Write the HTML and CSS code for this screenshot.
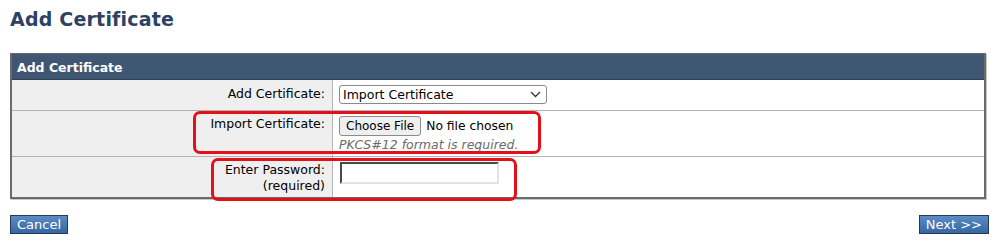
FILE: index.html
```html
<!DOCTYPE html>
<html>
<head>
<meta charset="utf-8">
<link rel="stylesheet" href="styles.css">
</head>
<body>
<h1 class="title">Add Certificate</h1>
<div class="panel">
  <div class="panel-head">Add Certificate</div>
  <div class="row row1">
    <div class="label">Add Certificate:</div>
    <div class="value">
      <div class="sel"><span>Import Certificate</span><svg class="chev" width="11" height="7" viewBox="0 0 11 7"><path d="M1 1 L5.5 5.5 L10 1" fill="none" stroke="#333" stroke-width="1.3"/></svg></div>
    </div>
  </div>
  <div class="row row2">
    <div class="label"><span class="lbl">Import Certificate:</span></div>
    <div class="value">
      <div class="file"><button class="choose">Choose File</button><span class="nofile">No file chosen</span></div>
      <div class="hint">PKCS#12 format is required.</div>
    </div>
    <div class="mark mark1"></div>
  </div>
  <div class="row row3">
    <div class="label"><span class="lbl">Enter Password:<br>(required)</span></div>
    <div class="value">
      <div class="pw"></div>
    </div>
    <div class="mark mark2"></div>
  </div>
</div>
<div class="actions">
  <button class="btn">Cancel</button>
  <button class="btn">Next &gt;&gt;</button>
</div>
</body>
</html>
```

FILE: styles.css
```css
* { box-sizing: border-box; }
body {
  margin: 0;
  padding: 0 13px 0 10px;
  font-family: "DejaVu Sans", Verdana, sans-serif;
  font-size: 12px;
  color: #000;
  background: #fff;
}
.title {
  margin: 0;
  padding-top: 8px;
  height: 53px;
  font-size: 19px;
  font-weight: bold;
  color: #2c4262;
  letter-spacing: 0.2px;
}
.panel {
  position: relative;
  border: 2px solid #6b6b6b;
  border-top: 1px solid #6b6b6b;
  box-shadow: 1px 1px 0 #c8c8c8;
}
.panel-head {
  height: 26px;
  background: #405774;
  color: #fff;
  font-weight: bold;
  font-size: 12.5px;
  padding: 6px 0 0 5px;
  border-bottom: 1px solid #2f4159;
}
.row {
  position: relative;
  display: grid;
  grid-template-columns: 321px 1fr;
  border-top: 1px solid #b4b4b4;
}
.panel-head + .row { border-top: none; }
.label {
  background: #efefef;
  border-right: 1px solid #b4b4b4;
  text-align: right;
  padding: 6px 7px 0 0;
  line-height: 16px;
  font-size: 12.5px;
}
.value { padding: 5px 0 0 6px; }
.row1 { height: 30px; }
.row2 { height: 46px; }
.row3 { height: 41px; }
.row2 .label { padding-top: 5px; }
.row3 .label { padding-top: 5px; }
.sel {
  display: flex;
  align-items: center;
  justify-content: space-between;
  width: 208px;
  height: 19px;
  font-size: 12.5px;
  border: 1px solid #8a8a8a;
  border-radius: 3px;
  background: #fff;
  padding: 0 5px 0 3px;
}
.chev { display: block; }
.file { display: flex; align-items: center; gap: 5px; }
.choose {
  font-family: "DejaVu Sans", sans-serif;
  font-size: 12px;
  height: 20px;
  padding: 0 6px;
  border: 1px solid #8c8c8c;
  border-radius: 3px;
  background: #efefef;
  color: #000;
}
.nofile { font-size: 12.3px; }
.hint {
  font-style: italic;
  color: #6a6a6a;
  font-size: 12.5px;
  margin-top: 1px;
}
.pw {
  width: 159px;
  height: 22px;
  border: 2px solid #e2e2e2;
  border-top-color: #4a4a4a;
  border-left-color: #4a4a4a;
  background: #fff;
  margin: 0 0 0 1px;
}
.mark {
  position: absolute;
  border: 3px solid #e3101a;
  border-radius: 7px;
}
.mark1 { left: 181px; top: 0; width: 348px; height: 43px; }
.mark2 { left: 199px; top: 1px; width: 306px; height: 43px; }
.actions {
  display: flex;
  justify-content: space-between;
  margin-top: 16px;
  margin-right: -3px;
}
.btn {
  font-family: "DejaVu Sans", sans-serif;
  font-size: 13px;
  color: #fff;
  height: 19px;
  padding: 0 6px;
  border: 1px solid #243a55;
  border-radius: 0;
  background: linear-gradient(#5a8bc4, #3767a3);
}
```
